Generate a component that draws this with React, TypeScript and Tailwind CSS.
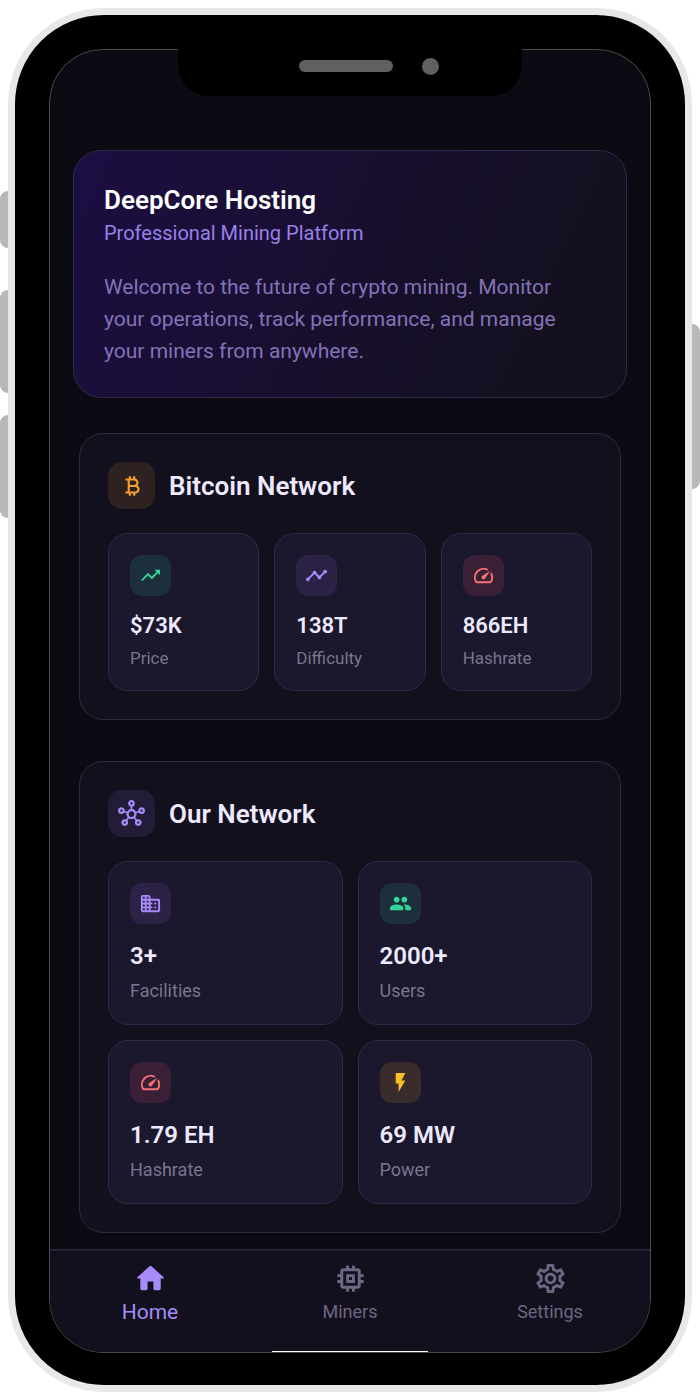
import type { ReactNode } from 'react'
import { MdCurrencyBitcoin, MdFlashOn, MdMemory, MdOutlineHub, MdOutlineSettings, MdSpeed, MdTimeline } from 'react-icons/md'

type Tone = 'green' | 'violet' | 'red' | 'amber'

interface Stat {
  value: string
  label: string
  tone: Tone
  icon: ReactNode
}

const tones: Record<Tone, string> = {
  green: 'bg-[#1e2f3c] text-[#34d399]',
  violet: 'bg-[#2b2245] text-[#a78bfa]',
  red: 'bg-[#3a2037] text-[#f87171]',
  amber: 'bg-[#3a2b2d] text-[#fbbf24]',
}

// Rounded Material glyphs, not shipped in react-icons/md
function Glyph({ d, size = 23 }: { d: string; size?: number }) {
  return (
    <svg width={size} height={size} viewBox="0 0 24 24" fill="currentColor" aria-hidden="true">
      <path d={d} />
    </svg>
  )
}

const HOME =
  'M10 19v-5h4v5c0 .55.45 1 1 1h3c.55 0 1-.45 1-1v-7h1.7c.46 0 .68-.57.33-.87L12.67 3.6c-.38-.34-.96-.34-1.34 0l-8.36 7.53c-.34.3-.13.87.33.87H5v7c0 .55.45 1 1 1h3c.55 0 1-.45 1-1z'
const TRENDING =
  'M16.85 6.85l1.44 1.44-4.88 4.88-3.29-3.29c-.39-.39-1.02-.39-1.41 0l-6 6.01c-.39.39-.39 1.02 0 1.41.39.39 1.02.39 1.41 0L9.41 12l3.29 3.29c.39.39 1.02.39 1.41 0l5.59-5.58 1.44 1.44c.31.31.85.09.85-.35V6.5c.01-.28-.21-.5-.49-.5h-4.29c-.45 0-.67.54-.36.85z'
const BUSINESS =
  'M12 7V5c0-1.1-.9-2-2-2H4c-1.1 0-2 .9-2 2v14c0 1.1.9 2 2 2h16c1.1 0 2-.9 2-2V9c0-1.1-.9-2-2-2h-8zM6 19H4v-2h2v2zm0-4H4v-2h2v2zm0-4H4V9h2v2zm0-4H4V5h2v2zm4 12H8v-2h2v2zm0-4H8v-2h2v2zm0-4H8V9h2v2zm0-4H8V5h2v2zm9 12h-7v-2h2v-2h-2v-2h2v-2h-2V9h7c.55 0 1 .45 1 1v8c0 .55-.45 1-1 1zm-1-8h-2v2h2v-2zm0 4h-2v2h2v-2z'
const PEOPLE =
  'M16 11c1.66 0 2.99-1.34 2.99-3S17.66 5 16 5s-3 1.34-3 3 1.34 3 3 3zm-8 0c1.66 0 2.99-1.34 2.99-3S9.66 5 8 5 5 6.34 5 8s1.34 3 3 3zm0 2c-2.33 0-7 1.17-7 3.5V18c0 .55.45 1 1 1h12c.55 0 1-.45 1-1v-1.5c0-2.33-4.67-3.5-7-3.5zm8 0c-.29 0-.62.02-.97.05.02.01.03.03.04.04 1.14.83 1.93 1.94 1.93 3.41V18c0 .35-.07.69-.18 1H22c.55 0 1-.45 1-1v-1.5c0-2.33-4.67-3.5-7-3.5z'

const bitcoinStats: Stat[] = [
  { value: '$73K', label: 'Price', tone: 'green', icon: <Glyph d={TRENDING} /> },
  { value: '138T', label: 'Difficulty', tone: 'violet', icon: <MdTimeline size={23} /> },
  { value: '866EH', label: 'Hashrate', tone: 'red', icon: <MdSpeed size={23} /> },
]

const networkStats: Stat[] = [
  { value: '3+', label: 'Facilities', tone: 'violet', icon: <Glyph d={BUSINESS} /> },
  { value: '2000+', label: 'Users', tone: 'green', icon: <Glyph d={PEOPLE} /> },
  { value: '1.79 EH', label: 'Hashrate', tone: 'red', icon: <MdSpeed size={23} /> },
  { value: '69 MW', label: 'Power', tone: 'amber', icon: <MdFlashOn size={23} /> },
]

function StatCard({ stat, large = false }: { stat: Stat; large?: boolean }) {
  return (
    <div className="rounded-[20px] border border-[#2f2a47] bg-[#1b172c] p-[21px]">
      <div className={`flex size-[41px] items-center justify-center rounded-xl ${tones[stat.tone]}`}>{stat.icon}</div>
      <p className={`mt-4 font-semibold text-[#ede9fe] ${large ? 'text-[24px] leading-[33px]' : 'text-[22px] leading-7'}`}>
        {stat.value}
      </p>
      <p className={`text-[#7a758c] ${large ? 'mt-1.5 text-[18px] leading-6' : 'mt-2 text-[17px] leading-[21px]'}`}>
        {stat.label}
      </p>
    </div>
  )
}

function Section({ title, badge, icon, children }: { title: string; badge: string; icon: ReactNode; children: ReactNode }) {
  return (
    <section className="rounded-3xl border border-[#2e2a40] bg-[#13101d] p-7">
      <div className="mb-6 flex items-center gap-[14px]">
        <div className={`flex size-[47px] items-center justify-center rounded-[14px] ${badge}`}>{icon}</div>
        <h2 className="text-[26px] leading-8 font-semibold text-[#ede9fe]">{title}</h2>
      </div>
      {children}
    </section>
  )
}

export default function App() {
  return (
    <div className="relative bg-white p-2 font-[Roboto,sans-serif]">
      {/* Side buttons */}
      <span className="absolute top-[191px] left-0 h-[57px] w-2 rounded-l-lg bg-[#b8b8b8]" />
      <span className="absolute top-[290px] left-0 h-[103px] w-2 rounded-l-lg bg-[#b8b8b8]" />
      <span className="absolute top-[415px] left-0 h-[103px] w-2 rounded-l-lg bg-[#b8b8b8]" />
      <span className="absolute top-[324px] right-0 h-[165px] w-2 rounded-r-lg bg-[#b8b8b8]" />

      {/* Phone body */}
      <div className="rounded-[96px] border-[7px] border-[#e8e8e8] bg-black px-[34px] pt-[34px] pb-8">
        <div className="flex flex-col rounded-[54px] border border-[#4a4a4a] bg-[#0c0a13]">
          {/* Notch, sits over the screen's top edge */}
          <div className="-mt-px mx-auto flex h-[47px] w-[344px] items-start gap-[29px] rounded-b-[31px] bg-black pt-[9px] pl-[121px]">
            <span className="mt-[2px] h-3 w-[94px] rounded-full bg-[#606060]" />
            <span className="size-[17px] rounded-full bg-[#606060]" />
          </div>

          <main className="px-[29px] pt-[54px] pb-4">
            <section className="-mx-[6px] rounded-[28px] border border-[#2f2947] bg-linear-[115deg] from-[#1c0e42] via-[#180f2e] via-50% to-[#13101d] to-90% p-[30px]">
              <h1 className="text-[26px] leading-[38px] font-semibold text-white">DeepCore Hosting</h1>
              <p className="mt-0.5 text-[20px] leading-6 text-[#9b80ea]">Professional Mining Platform</p>
              <p className="mt-[26px] text-[21px] leading-8 text-[#8472b8]">
                Welcome to the future of crypto mining. Monitor your operations, track performance, and manage your miners
                from anywhere.
              </p>
            </section>

            <div className="mt-[35px] flex flex-col gap-[41px]">
              <Section title="Bitcoin Network" badge="bg-[#2e2220] text-[#f59e2b]" icon={<MdCurrencyBitcoin size={26} />}>
                <div className="grid grid-cols-3 gap-[15px]">
                  {bitcoinStats.map(stat => (
                    <StatCard key={stat.label} stat={stat} />
                  ))}
                </div>
              </Section>

              <Section title="Our Network" badge="bg-[#231c38] text-[#a78bfa]" icon={<MdOutlineHub size={27} />}>
                <div className="grid grid-cols-2 gap-[15px]">
                  {networkStats.map(stat => (
                    <StatCard key={stat.label} stat={stat} large />
                  ))}
                </div>
              </Section>
            </div>
          </main>

          {/* Tab bar */}
          <nav className="rounded-b-[53px] border-t-2 border-[#262139] bg-[#13101d]">
            <div className="grid h-[100px] grid-cols-3 pt-[10px] text-[#6d6684]">
              <a href="#home" className="flex flex-col items-center text-[21px] leading-7 text-[#a78bfa]">
                <Glyph d={HOME} size={35} />
                <span className="mt-0.5">Home</span>
              </a>
              <a href="#miners" className="flex flex-col items-center text-[18px] leading-8">
                <MdMemory size={35} />
                <span>Miners</span>
              </a>
              <a href="#settings" className="flex flex-col items-center text-[18px] leading-8">
                <MdOutlineSettings size={35} />
                <span>Settings</span>
              </a>
            </div>
            <div className="mx-auto h-px w-[156px] bg-white" />
          </nav>
        </div>
      </div>
    </div>
  )
}
